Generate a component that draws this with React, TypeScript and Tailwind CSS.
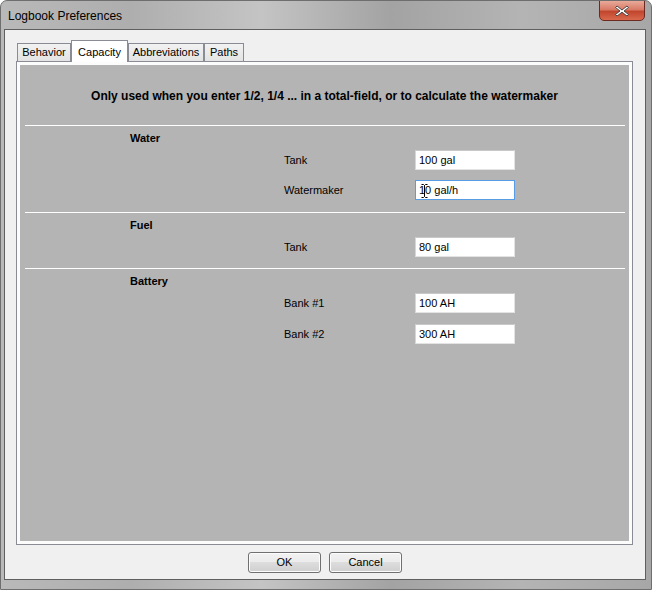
import React from "react";

const font = { fontFamily: '"Liberation Sans", Arial, sans-serif' };

function Field({ value, focused }: { value: string; focused?: boolean }) {
  return (
    <div
      className={
        "relative w-[100px] h-[20px] bg-white flex items-center pl-[3px] text-[11px] text-black border " +
        (focused
          ? "border-[#569de5]"
          : "border-t-[#c8c8c8] border-l-[#d6d6d6] border-r-[#e3e3e3] border-b-[#e3e3e3]")
      }
    >
      {value}
      {focused && (
        <svg className="absolute left-[5px] top-[3px]" width="7" height="14" viewBox="0 0 7 14">
          <path d="M0.5 0.5h2l1 1 1-1h2M3.5 1.5v11M0.5 13.5h2l1-1 1 1h2" stroke="#000" strokeWidth="1" fill="none" />
        </svg>
      )}
    </div>
  );
}

function Row({ label, value, focused, mt }: { label: string; value: string; focused?: boolean; mt: string }) {
  return (
    <div className={"flex items-center h-[20px] " + mt}>
      <div className="w-[395px] pl-[264px] text-[11px] text-black whitespace-nowrap">{label}</div>
      <Field value={value} focused={focused} />
    </div>
  );
}

function Sep({ mt }: { mt: string }) {
  return <div className={"h-px bg-white ml-[5px] mr-[4px] " + mt} />;
}

function Header({ text }: { text: string }) {
  return <div className="mt-[5px] h-[14px] leading-[14px] pl-[110px] text-[11px] font-bold text-black">{text}</div>;
}

function Tab({ label, w, selected }: { label: string; w: string; selected?: boolean }) {
  if (selected) {
    return (
      <div
        className={
          "relative z-10 -mb-px h-[22px] border border-b-0 border-[#898c95] bg-white flex items-start justify-center pt-[3px] text-[11px] text-black " +
          w
        }
      >
        {label}
      </div>
    );
  }
  return (
    <div
      className={
        "h-[18px] border border-b-0 border-[#898c95] bg-gradient-to-b from-[#f2f2f2] to-[#e3e3e3] flex items-center justify-center text-[11px] text-black " +
        w
      }
    >
      {label}
    </div>
  );
}

function Btn({ label }: { label: string }) {
  return (
    <div className="w-[73px] h-[21px] rounded-[3px] border border-[#707070] bg-[linear-gradient(to_bottom,#f2f2f2_0%,#ebebeb_50%,#dddddd_50%,#cfcfcf_100%)] shadow-[inset_0_0_0_1px_#fcfcfc] flex items-center justify-center text-[11px] text-black">
      {label}
    </div>
  );
}

export default function App() {
  return (
    <div
      className="relative w-[652px] h-[590px] overflow-hidden rounded-t-[7px] bg-[linear-gradient(to_right,#b9b9b9_0%,#aeaeae_20%,#c4c4c4_40%,#a3a3a3_60%,#b4b4b4_80%,#a7a7a7_100%)] border border-[#6e6e6e]"
      style={font}
    >
      {/* title bar */}
      <div className="h-[28px] flex items-center pl-[7px] pt-[2px] text-[12px] text-black">Logbook Preferences</div>
      <div className="absolute top-[-1px] right-[6px] w-[46px] h-[21px] rounded-b-[5px] border border-[#6b2b22] bg-[linear-gradient(to_bottom,#e9a99a_0%,#d87b66_45%,#c0462d_55%,#d9694d_100%)] flex items-center justify-center">
        <svg width="14" height="12" viewBox="0 0 14 12">
          <path d="M2 1l5 4 5-4 1.5 1.5-4.5 3.5 4.5 3.5L12 11 7 7.2 2 11 0.5 9.5 5 6 0.5 2.5z" fill="#fff" stroke="#3b3b3b" strokeWidth="0.9" strokeLinejoin="round" />
        </svg>
      </div>

      {/* client */}
      <div className="ml-[3px] w-[642px] h-[551px] border border-[#5f5f5f] bg-[#f0f0f0] flex flex-col">
        <div className="pt-[10px] pl-[12px] flex items-end h-[31px]">
          <Tab label="Behavior" w="w-[54px]" />
          <Tab label="Capacity" w="w-[57px]" selected />
          <Tab label="Abbreviations" w="w-[76px]" />
          <Tab label="Paths" w="w-[40px]" />
        </div>
        <div className="ml-[11px] w-[617px] h-[484px] border border-[#898c95] bg-[#fcfcfc] p-[3px]">
          <div className="w-full h-full bg-[#b4b4b4] flex flex-col">
            <div className="mt-[24px] h-[14px] leading-[14px] text-center text-[12px] font-bold text-black">
              Only used when you enter 1/2, 1/4 ... in a total-field, or to calculate the watermaker
            </div>
            <Sep mt="mt-[22px]" />
            <Header text="Water" />
            <Row label="Tank" value="100 gal" mt="mt-[5px]" />
            <Row label="Watermaker" value="10 gal/h" focused mt="mt-[10px]" />
            <Sep mt="mt-[12px]" />
            <Header text="Fuel" />
            <Row label="Tank" value="80 gal" mt="mt-[5px]" />
            <Sep mt="mt-[11px]" />
            <Header text="Battery" />
            <Row label="Bank #1" value="100 AH" mt="mt-[5px]" />
            <Row label="Bank #2" value="300 AH" mt="mt-[11px]" />
          </div>
        </div>
        <div className="mt-[7px] flex justify-center gap-[8px]">
          <Btn label="OK" />
          <Btn label="Cancel" />
        </div>
      </div>
    </div>
  );
}
